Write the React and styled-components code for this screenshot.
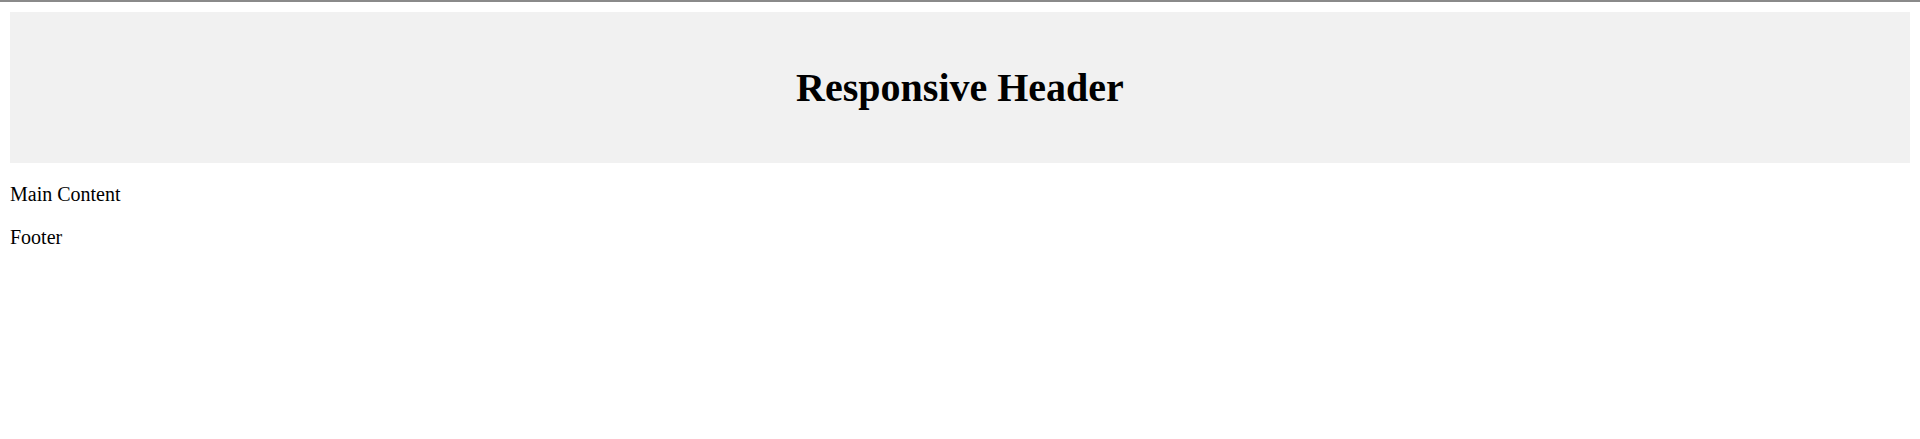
import React from 'react';
import styled, { createGlobalStyle } from 'styled-components';

const GlobalStyle = createGlobalStyle`
    html {
        border-top: 2px solid #8a8a8a;
    }
    body {
        margin: 10px;
        background: #fff;
        color: #000;
        font-family: "Liberation Serif", "Times New Roman", serif;
        font-size: 20px;
    }
`;

const App = () => {
    return (
        <>
            <GlobalStyle />
            <Header>
                <Title>Responsive Header</Title>
            </Header>
            <Main>
                <Text>Main Content</Text>
            </Main>
            <Footer>
                <Text>Footer</Text>
            </Footer>
        </>
    );
}

export default App;

const Header = styled.header`
    background: #f1f1f1;
    padding: 25px;
    text-align: center;
`;
const Title = styled.h1`
    font-size: 40px;
    font-weight: bold;
    margin: 26.8px 0;
`;
const Main = styled.main`
`;
const Footer = styled.footer`
`;
const Text = styled.p`
    margin: 20px 0;
`;
